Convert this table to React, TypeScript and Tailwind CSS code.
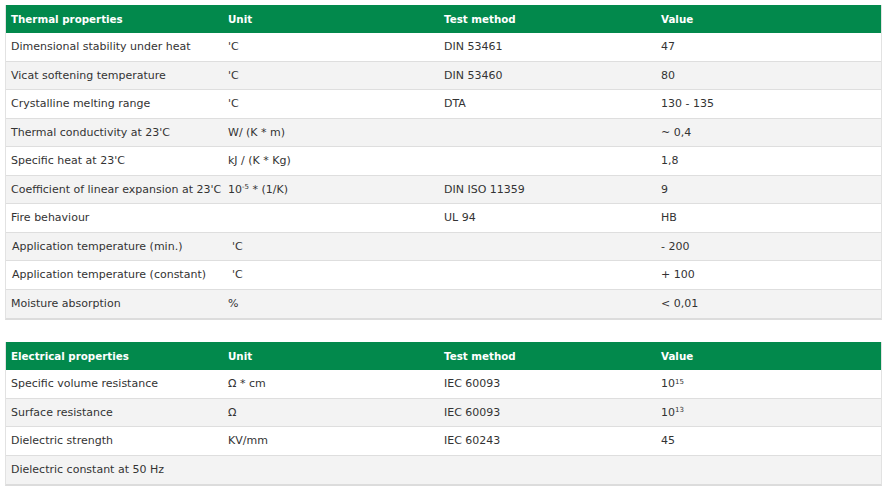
import React from "react";

type Row = [React.ReactNode, React.ReactNode, string, React.ReactNode];

const thermal: Row[] = [
  ["Dimensional stability under heat", "'C", "DIN 53461", "47"],
  ["Vicat softening temperature", "'C", "DIN 53460", "80"],
  ["Crystalline melting range", "'C", "DTA", "130 - 135"],
  ["Thermal conductivity at 23'C", "W/ (K * m)", "", "~ 0,4"],
  ["Specific heat at 23'C", "kJ / (K * Kg)", "", "1,8"],
  [
    "Coefficient of linear expansion at 23'C",
    <>
      10<sup className="text-[7px]">-5</sup> * (1/K)
    </>,
    "DIN ISO 11359",
    "9",
  ],
  ["Fire behaviour", "", "UL 94", "HB"],
  [<span className="pl-[1px]">Application temperature (min.)</span>, <span className="pl-[4px]">'C</span>, "", "- 200"],
  [<span className="pl-[1px]">Application temperature (constant)</span>, <span className="pl-[4px]">'C</span>, "", "+ 100"],
  ["Moisture absorption", "%", "", "< 0,01"],
];

const electrical: Row[] = [
  ["Specific volume resistance", "Ω * cm", "IEC 60093", <>10<sup className="text-[7px]">15</sup></>],
  ["Surface resistance", "Ω", "IEC 60093", <>10<sup className="text-[7px]">13</sup></>],
  ["Dielectric strength", "KV/mm", "IEC 60243", "45"],
  ["Dielectric constant at 50 Hz", "", "", ""],
];

const cols = "grid grid-cols-[217px_216px_217px_1fr]";

function Table({ title, rows }: { title: string; rows: Row[] }) {
  return (
    <div className="w-[877px] border-l border-r border-[#e2e2e2] border-b-2 border-b-[#dcdcdc]">
      <div className={`${cols} h-[28px] pt-[2px] items-center bg-[#02894c] text-white font-bold text-[10.3px]`}>
        <div className="pl-[5px]">{title}</div>
        <div className="pl-[5px]">Unit</div>
        <div className="pl-[5px]">Test method</div>
        <div className="pl-[5px]">Value</div>
      </div>
      {rows.map((r, i) => (
        <div
          key={i}
          className={`${cols} h-[28.5px] pt-[1px] items-center ${i < rows.length - 1 ? "border-b border-[#dedede]" : ""} ${
            i % 2 === 1 ? "bg-[#f3f3f3]" : "bg-white"
          }`}
        >
          <div className="pl-[5px] whitespace-nowrap">{r[0]}</div>
          <div className="pl-[5px] whitespace-nowrap">{r[1]}</div>
          <div className="pl-[5px] whitespace-nowrap">{r[2]}</div>
          <div className="pl-[5px] whitespace-nowrap">{r[3]}</div>
        </div>
      ))}
    </div>
  );
}

export default function App() {
  return (
    <div className="w-[887px] h-[492px] bg-white overflow-hidden pt-[5px] pl-[5px] text-[11px] text-[#333] font-['DejaVu_Sans',Verdana,sans-serif]">
      <Table title="Thermal properties" rows={thermal} />
      <div className="h-[22px]" />
      <Table title="Electrical properties" rows={electrical} />
    </div>
  );
}
